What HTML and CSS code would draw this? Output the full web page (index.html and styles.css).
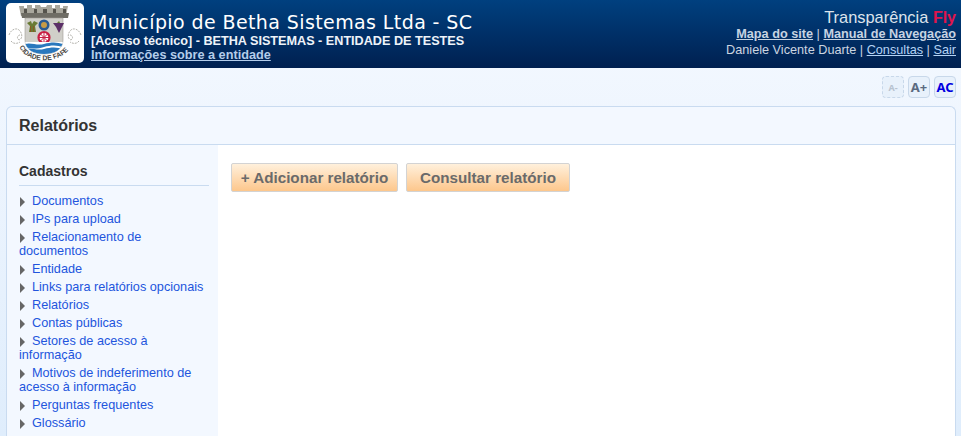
FILE: index.html
```html
<!DOCTYPE html>
<html lang="pt-BR">
<head>
<meta charset="utf-8">
<title>Relatórios</title>
<link rel="stylesheet" href="styles.css">
</head>
<body>
<header class="top">
  <div class="logo">
    <svg width="78" height="60" viewBox="0 0 78 60">
      <defs>
        <path id="ribbon" d="M13 43C20 62 56 62 65 43"/>
        <clipPath id="shield"><path d="M19 15h38v22c0 9-8 14-19 14s-19-5-19-14z"/></clipPath>
      </defs>
      <g fill="none" stroke="#b3b2ac" stroke-width="1" stroke-dasharray="2 1">
        <path d="M3 32c2-6 8-8 11-4s2 8-1 9c-3-2-1-5 1-5M5 38c2 3 6 3 9 1"/>
        <path d="M75 32c-2-6-8-8-11-4s-2 8 1 9c3-2 1-5-1-5M73 38c-2 3-6 3-9 1"/>
      </g>
      <path d="M13 3h5v2h3V2h5v3h3V2h5l1 2h5l1-2h5v3h3V2h5v3h3V3h5l-2 10H15z" fill="#a9a79d"/>
      <path d="M15 10h48l-1 5H16z" fill="#6f6d65"/>
      <path d="M18 6h3v4h-3zM28 6h3v4h-3zM37 6h4v4h-4zM47 6h3v4h-3zM57 6h3v4h-3z" fill="#55534c"/>
      <path d="M19 15h38v22c0 9-8 14-19 14s-19-5-19-14z" fill="#d0cfc9" stroke="#9d9c95" stroke-width=".6"/>
      <path d="M21 20l4-2 1 3 2-3 4 2-3 3 1 6h-7l1-6z" fill="#6a7b35"/>
      <path d="M24 23h1v6h-1zM27 23h1v6h-1z" fill="#8a5a24"/>
      <circle cx="38" cy="22" r="5.500" fill="#2a5a92"/>
      <circle cx="38" cy="22" r="3" fill="#c79b46"/>
      <path d="M47 20h11l-2 4-3 6-3-6z" fill="#5c3068"/>
      <path d="M51 20l2-2 1 2z" fill="#5f7a32"/>
      <circle cx="38" cy="34.500" r="5.500" fill="#fff" stroke="#c81f44" stroke-width="2.200"/>
      <path d="M38 29v11M32.500 34.500h11M34 30.500l8 8M42 30.500l-8 8" stroke="#c81f44" stroke-width="1"/>
      <g clip-path="url(#shield)">
        <rect x="19" y="39" width="38" height="13" fill="#fff"/>
        <path d="M19 41c6-2 12 2 19 0s13-2 19 0v3c-6-2-12-2-19 0s-13 2-19 0z" fill="#2a78bd"/>
        <path d="M19 46c6-2 12 2 19 0s13-2 19 0v6H19z" fill="#2a78bd"/>
      </g>
      <text class="logo-text"><textPath href="#ribbon" startOffset="1">CIDADE DE FAFE</textPath></text>
    </svg>
  </div>
  <div class="entity">
    <h1 class="entity-name">Município de Betha Sistemas Ltda - SC</h1>
    <div class="entity-line">[Acesso técnico] - BETHA SISTEMAS - ENTIDADE DE TESTES</div>
    <a class="entity-link" href="#">Informações sobre a entidade</a>
  </div>
  <div class="user">
    <div class="brand">Transparência <span class="fly">Fly</span></div>
    <div class="user-line"><a class="strong" href="#">Mapa do site</a> | <a class="strong" href="#">Manual de Navegação</a></div>
    <div class="user-line user-last">Daniele Vicente Duarte | <a href="#">Consultas</a> | <a href="#">Sair</a></div>
  </div>
</header>
<div class="access">
  <button class="size size-off">A-</button>
  <button class="size size-plus">A+</button>
  <button class="size size-contrast">AC</button>
</div>
<main class="panel">
  <h2 class="panel-title">Relatórios</h2>
  <div class="panel-body">
    <nav class="side">
      <h3 class="side-title">Cadastros</h3>
      <ul class="menu">
        <li><a href="#">Documentos</a></li>
        <li><a href="#">IPs para upload</a></li>
        <li><a href="#">Relacionamento de documentos</a></li>
        <li><a href="#">Entidade</a></li>
        <li><a href="#">Links para relatórios opcionais</a></li>
        <li><a href="#">Relatórios</a></li>
        <li><a href="#">Contas públicas</a></li>
        <li><a href="#">Setores de acesso à informação</a></li>
        <li><a href="#">Motivos de indeferimento de acesso à informação</a></li>
        <li><a href="#">Perguntas frequentes</a></li>
        <li><a href="#">Glossário</a></li>
      </ul>
    </nav>
    <section class="content">
      <button class="action">+ Adicionar relatório</button>
      <button class="action">Consultar relatório</button>
    </section>
  </div>
</main>
</body>
</html>
```
FILE: styles.css
```css
* { box-sizing: border-box; }
html, body { height: 100%; }
body {
  margin: 0;
  overflow: hidden;
  background: linear-gradient(#f5f9ff, #dfedfc) no-repeat;
  font-family: "Liberation Sans", Arial, sans-serif;
  font-size: 12.7px;
}
.top {
  display: flex;
  height: 68px;
  padding: 3px 5px 0 6px;
  background: linear-gradient(#00407f, #002050);
  color: #fff;
}
.logo {
  width: 78px;
  height: 60px;
  background: #fff;
  border-radius: 5px;
  flex: none;
}
.logo svg { display: block; }
.logo-text {
  font: bold 6.8px "Liberation Sans", sans-serif;
  fill: #45433d;
}
.entity { margin-left: 7px; padding-top: 8px; flex: 1; }
.entity-name {
  margin: 0;
  font: normal 19px/23px "DejaVu Sans", sans-serif;
  letter-spacing: 0.4px;
  color: #fff;
}
.entity-line { font-size: 12.65px; font-weight: bold; line-height: 14px; color: #eef3f9; }
.entity-link { display: block; font-weight: bold; line-height: 15px; color: #b4cdea; }
.user { text-align: right; color: #ccd5e0; padding-top: 6px; }
.brand { font-size: 16.4px; line-height: 16px; color: #dde4ec; }
.fly { font-size: 16px; font-weight: bold; color: #e0144c; }
.user-line { line-height: 16px; }
.user-last { margin-top: 0; }
.user a { color: #b4d3f5; }
.user a.strong { font-weight: bold; color: #c6d3e2; }
.access {
  display: flex;
  justify-content: flex-end;
  gap: 4px;
  height: 38px;
  padding: 8px 5px 0 0;
}
.size {
  width: 22px;
  height: 22px;
  padding: 0;
  border: 1px solid #c8d8ea;
  border-radius: 4px;
  background: #e8f1fb;
  font: bold 13px "Noto Sans", sans-serif;
  color: #5a6a80;
}
.size-off { font-size: 9px; color: #b7c2cf; border-style: dashed; }
.size-contrast { color: #0000e0; }
.panel {
  margin: 0 0 0 6px;
  width: 950px;
  height: 330px;
  border: 1px solid #c9dbf0;
  border-bottom: 0;
  border-radius: 6px 6px 0 0;
  background: #f3f8ff;
}
.panel-title {
  margin: 0;
  height: 38px;
  padding-left: 12px;
  font-size: 16px;
  line-height: 37px;
  color: #333;
  border-bottom: 1px solid #c9dbf0;
}
.panel-body { display: flex; height: 292px; }
.side { width: 211px; padding: 18px 9px 0 12px; flex: none; }
.side-title {
  margin: 0;
  padding-bottom: 6px;
  font-size: 14px;
  line-height: 16px;
  color: #333;
  border-bottom: 1px solid #c9dbf0;
}
.menu { list-style: none; margin: 8px 0 0; padding: 0; }
.menu li { padding-bottom: 4px; line-height: 14px; }
.menu li::before {
  content: "";
  display: inline-block;
  margin: 0 7px 0 1px;
  vertical-align: -2px;
  border-left: 5px solid #666;
  border-top: 5px solid transparent;
  border-bottom: 5px solid transparent;
}
.menu a { color: #2255dd; text-decoration: none; }
.content {
  flex: 1;
  background: #fff;
  padding: 18px 13px;
  display: flex;
  align-items: flex-start;
  gap: 8px;
}
.action {
  width: 167px;
  height: 29px;
  padding: 0;
  border: 1px solid #d3d3d3;
  border-radius: 2px;
  background: linear-gradient(#fff0dc, #fdc78c);
  font: bold 15.2px "Liberation Sans", Arial, sans-serif;
  color: #6a6a6a;
}
.action + .action { width: 164px; }
```
